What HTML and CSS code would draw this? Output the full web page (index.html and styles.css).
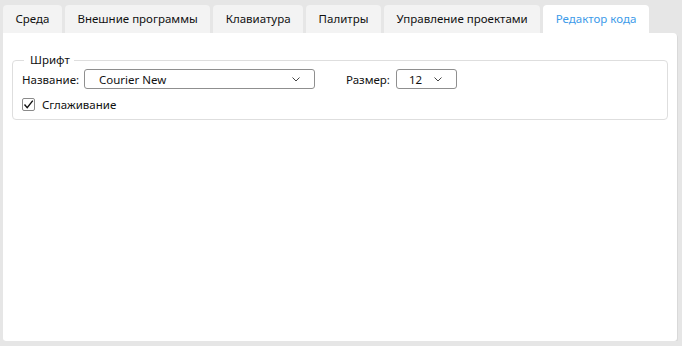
FILE: index.html
```html
<!DOCTYPE html>
<html lang="ru">
  <head>
    <meta charset="UTF-8" />
    <meta name="viewport" content="width=device-width, initial-scale=1.0" />
    <title>Настройки</title>
    <link rel="stylesheet" href="styles.css">
  </head>
  <body>
    <div class="tabs">
      <div class="tab">Среда</div>
      <div class="tab">Внешние программы</div>
      <div class="tab">Клавиатура</div>
      <div class="tab">Палитры</div>
      <div class="tab">Управление проектами</div>
      <div class="tab active">Редактор кода</div>
    </div>
    <div class="panel">
      <fieldset class="group">
        <legend>Шрифт</legend>
        <div class="row">
          <label class="caption">Название:</label>
          <div class="combo combo-name">
            <span>Courier New</span>
            <svg class="chevron" width="8" height="5" viewBox="0 0 8 5"><path d="M0.5 0.5 L4 4 L7.5 0.5" fill="none" stroke="#444" stroke-width="1"/></svg>
          </div>
          <label class="caption caption-size">Размер:</label>
          <div class="combo combo-size">
            <span>12</span>
            <svg class="chevron" width="8" height="5" viewBox="0 0 8 5"><path d="M0.5 0.5 L4 4 L7.5 0.5" fill="none" stroke="#444" stroke-width="1"/></svg>
          </div>
        </div>
        <div class="row check-row">
          <span class="checkbox">
            <svg width="11" height="11" viewBox="0 0 11 11"><path d="M1.5 5.5 L4.2 8.6 L9.8 1.6" fill="none" stroke="#111" stroke-width="1.4"/></svg>
          </span>
          <span>Сглаживание</span>
        </div>
      </fieldset>
    </div>
  </body>
</html>
```

FILE: styles.css
```css
body {
  margin: 0;
  background-color: #e6e6e6;
  font-family: "Noto Sans", "Open Sans", sans-serif;
  font-size: 11.5px;
  color: #111;
}
.tabs {
  display: flex;
  gap: 3px;
  padding: 5px 0 0 3px;
}
.tab {
  height: 28px;
  line-height: 28px;
  padding: 0 12.5px;
  background-color: #f3f3f3;
  border-radius: 4px 4px 0 0;
}
.tab.active {
  background-color: #fff;
  color: #3d9be9;
}
.panel {
  height: 289px;
  margin: 0 5px 0 3px;
  padding: 19px 9px 0 9px;
  background-color: #fff;
  border-radius: 0 4px 3px 3px;
  box-shadow: 1px 1px 0 #d9d9d9;
}
.group {
  margin: 0;
  padding: 0 9px 7px 9px;
  border: 1px solid #dedede;
  border-radius: 4px;
}
.group legend {
  margin-left: 2px;
  padding: 0 4px 0 6px;
  line-height: 16px;
}
.row {
  display: flex;
  align-items: center;
  height: 20px;
  margin-top: 1px;
}
.caption {
  width: 62px;
}
.caption-size {
  width: 50px;
  margin-left: 31px;
}
.combo {
  display: flex;
  align-items: center;
  justify-content: space-between;
  box-sizing: border-box;
  height: 20px;
  padding: 0 14px 0 14px;
  border: 1px solid #8f8f8f;
  border-radius: 3px;
}
.combo-name {
  width: 231px;
}
.combo-size {
  width: 61px;
  padding-left: 12px;
}
.chevron {
  display: block;
}
.check-row {
  height: 16px;
  margin-top: 7px;
  gap: 7px;
}
.checkbox {
  display: flex;
  align-items: center;
  justify-content: center;
  box-sizing: border-box;
  width: 13px;
  height: 13px;
  border: 1px solid #8a8a8a;
  border-radius: 2px;
}
```
